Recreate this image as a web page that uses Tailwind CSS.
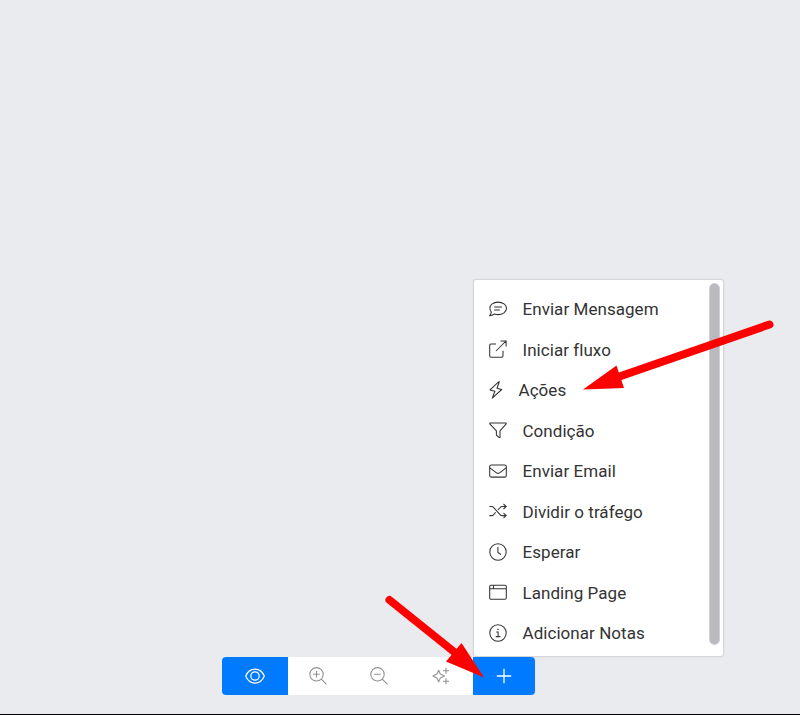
<!DOCTYPE html>
<html lang="pt-BR">
<head>
<meta charset="utf-8">
<title>Editor de fluxo</title>
<script src="https://cdn.jsdelivr.net/npm/@tailwindcss/browser@4"></script>
</head>
<body class="bg-[#e9ebef] font-[Roboto,sans-serif] overflow-hidden">
<main class="relative flex h-[715px] w-[800px] flex-col justify-end overflow-hidden border-b border-black pb-[19px]">

  <div class="ml-[222px] flex h-[38px] w-[312.500px] overflow-hidden rounded bg-white text-[#929292]">
    <button class="flex w-[65.5px] items-center justify-center bg-[#007bff] text-white" aria-label="Visualizar">
      <svg class="h-5 w-5" viewBox="0 0 20 20" fill="none" stroke="currentColor" stroke-width="1.250"><path d="M.7 10C2.500 5.500 6 3 10 3s7.500 2.500 9.300 7C17.500 14.500 14 17 10 17S2.500 14.500.7 10Z"/><circle cx="10" cy="10" r="4.200"/></svg>
    </button>
    <button class="flex w-[61px] items-center justify-center" aria-label="Aproximar">
      <svg class="h-[18px] w-[18px]" viewBox="0 0 18 18" fill="none" stroke="currentColor" stroke-width="1.100"><circle cx="7.500" cy="7.300" r="6.700"/><path d="m12.300 12.100 5.200 5.200M7.500 4v6.600M4.200 7.300h6.600"/></svg>
    </button>
    <button class="flex w-[62px] items-center justify-center pr-px" aria-label="Afastar">
      <svg class="h-[18px] w-[18px]" viewBox="0 0 18 18" fill="none" stroke="currentColor" stroke-width="1.100"><circle cx="7.500" cy="7.300" r="6.700"/><path d="m12.300 12.100 5.200 5.200M4.200 7.300h6.600"/></svg>
    </button>
    <button class="flex w-[62px] items-center justify-center pr-px" aria-label="Organizar">
      <svg class="h-[18px] w-[18px]" viewBox="0 0 18 18" fill="none" stroke="currentColor" stroke-width="1.100"><path d="M6.700 3.200 8.300 7.100 12.500 9 8.300 10.900 6.700 14.900 4.900 10.900.9 9 4.900 7.100Z" stroke-linejoin="round"/><path d="M14 .7v6M11 3.700h6M14 11.300v6M11 14.300h6"/></svg>
    </button>
    <button class="flex flex-1 items-center justify-center bg-[#007bff] text-white" aria-label="Adicionar">
      <svg class="h-4 w-4" viewBox="0 0 16 16" fill="none" stroke="currentColor" stroke-width="1.300"><path d="M8 .8v14.400M.8 8h14.400"/></svg>
    </button>
  </div>

  <div class="absolute left-[473px] top-[279px] flex h-[378px] w-[251px] justify-between rounded-[3px] border border-[#d5d5da] bg-white pr-[3px] shadow-[0_0_2px_rgba(0,0,0,0.08)]">
    <ul class="flex flex-col pl-[15px] pt-[9.750px] text-[17px] tracking-[0.05px] text-[#333] [&>li]:flex [&>li]:h-[40.500px] [&>li]:items-center [&>li]:gap-[15.500px] [&_svg]:-mt-[3px] [&_svg]:h-[18px] [&_svg]:w-[18px] [&_svg]:shrink-0 [&_svg]:fill-none [&_svg]:stroke-current [&_svg]:stroke-[1.050]">
      <li><svg viewBox="0 0 18 18"><path d="M2.300 12.100A6.300 6.300 0 0 1 .9 8.200C.9 4.700 4.300 2.100 9 2.100s8.500 2.600 8.500 6.200-3.800 6.300-8.500 6.300c-1.300 0-2.500-.2-3.600-.6C4.100 15 2.500 15.700.7 15.700c.8-1 1.400-2.200 1.600-3.600Z"/><path d="M5.200 7h7.800M5.200 10h5.500"/></svg><span>Enviar Mensagem</span></li>
      <li><svg viewBox="0 0 18 18"><path d="M7 3.900H2A1.400 1.400 0 0 0 .7 5.300v10.500c0 .8.600 1.400 1.400 1.400h10.500c.8 0 1.400-.6 1.400-1.400v-5M11.500.9h5.600v5.600M17 1 7 11"/></svg><span>Iniciar fluxo</span></li>
      <li class="-ml-[4px]"><svg class="ml-1 -mr-1" viewBox="0 0 18 18"><path d="M9.600.9 1 8.900l4.900 1.400-2.600 6.800L12.700 8.500 8 7.200 10.300.7Z" stroke-linejoin="round"/></svg><span>Ações</span></li>
      <li><svg viewBox="0 0 18 18"><path d="M.8 1.900h16.400v1L11 9.800v6.600h-1.100L7.400 14V9.800L.8 2.900Z" stroke-linejoin="round"/></svg><span>Condição</span></li>
      <li><svg viewBox="0 0 18 18"><rect x=".7" y="2.900" width="16.600" height="12.200" rx="1.700"/><path d="m.8 5.900 6.700 4.900c.9.700 2.100.7 3 0l6.700-4.900"/></svg><span>Enviar Email</span></li>
      <li><svg viewBox="0 0 18 18"><path d="M.4 4.500h2.300c.7 0 1.300.3 1.700.8l6.900 7.500c.4.500 1 .8 1.700.8h4M.4 13.600h2.300c.7 0 1.300-.3 1.700-.8l2.300-2.500M8.800 8l2.500-2.700c.4-.5 1-.8 1.700-.8h4M14.500 2 17.200 4.500 14.500 7M14.500 11.100l2.700 2.500-2.700 2.500"/></svg><span>Dividir o tráfego</span></li>
      <li><svg viewBox="0 0 18 18"><circle cx="9" cy="9" r="8.200"/><path d="M8.900 4v5.500l3 2"/></svg><span>Esperar</span></li>
      <li><svg viewBox="0 0 18 18"><rect x=".7" y="2.300" width="16.600" height="14" rx="1.300"/><path d="M.7 5.800h16.600M4.500 2.300v3.500"/></svg><span>Landing Page</span></li>
      <li><svg viewBox="0 0 18 18"><circle cx="9" cy="9" r="8.200"/><path d="M7.200 8h1.900v4.500M6.700 12.600h4.700"/><circle cx="9" cy="5.300" r=".5" fill="currentColor" stroke-width=".5"/></svg><span>Adicionar Notas</span></li>
    </ul>
    <div class="mt-[3px] h-[362px] w-[11px] rounded-full border border-[#d0cfd5] bg-[#bab9c0]"></div>
  </div>

  <svg class="pointer-events-none absolute inset-0 h-[715px] w-[800px]" viewBox="0 0 800 715" fill="red" stroke="red" aria-hidden="true">
    <path d="M769.500 324.500 618 377M389.500 600 458 655" stroke-width="8" stroke-linecap="round"/>
    <path d="M583 389.500 616.500 365.500 624 388ZM484 677.500 446 661.500 461.500 643Z" stroke="none"/>
  </svg>
</main>
</body>
</html>
